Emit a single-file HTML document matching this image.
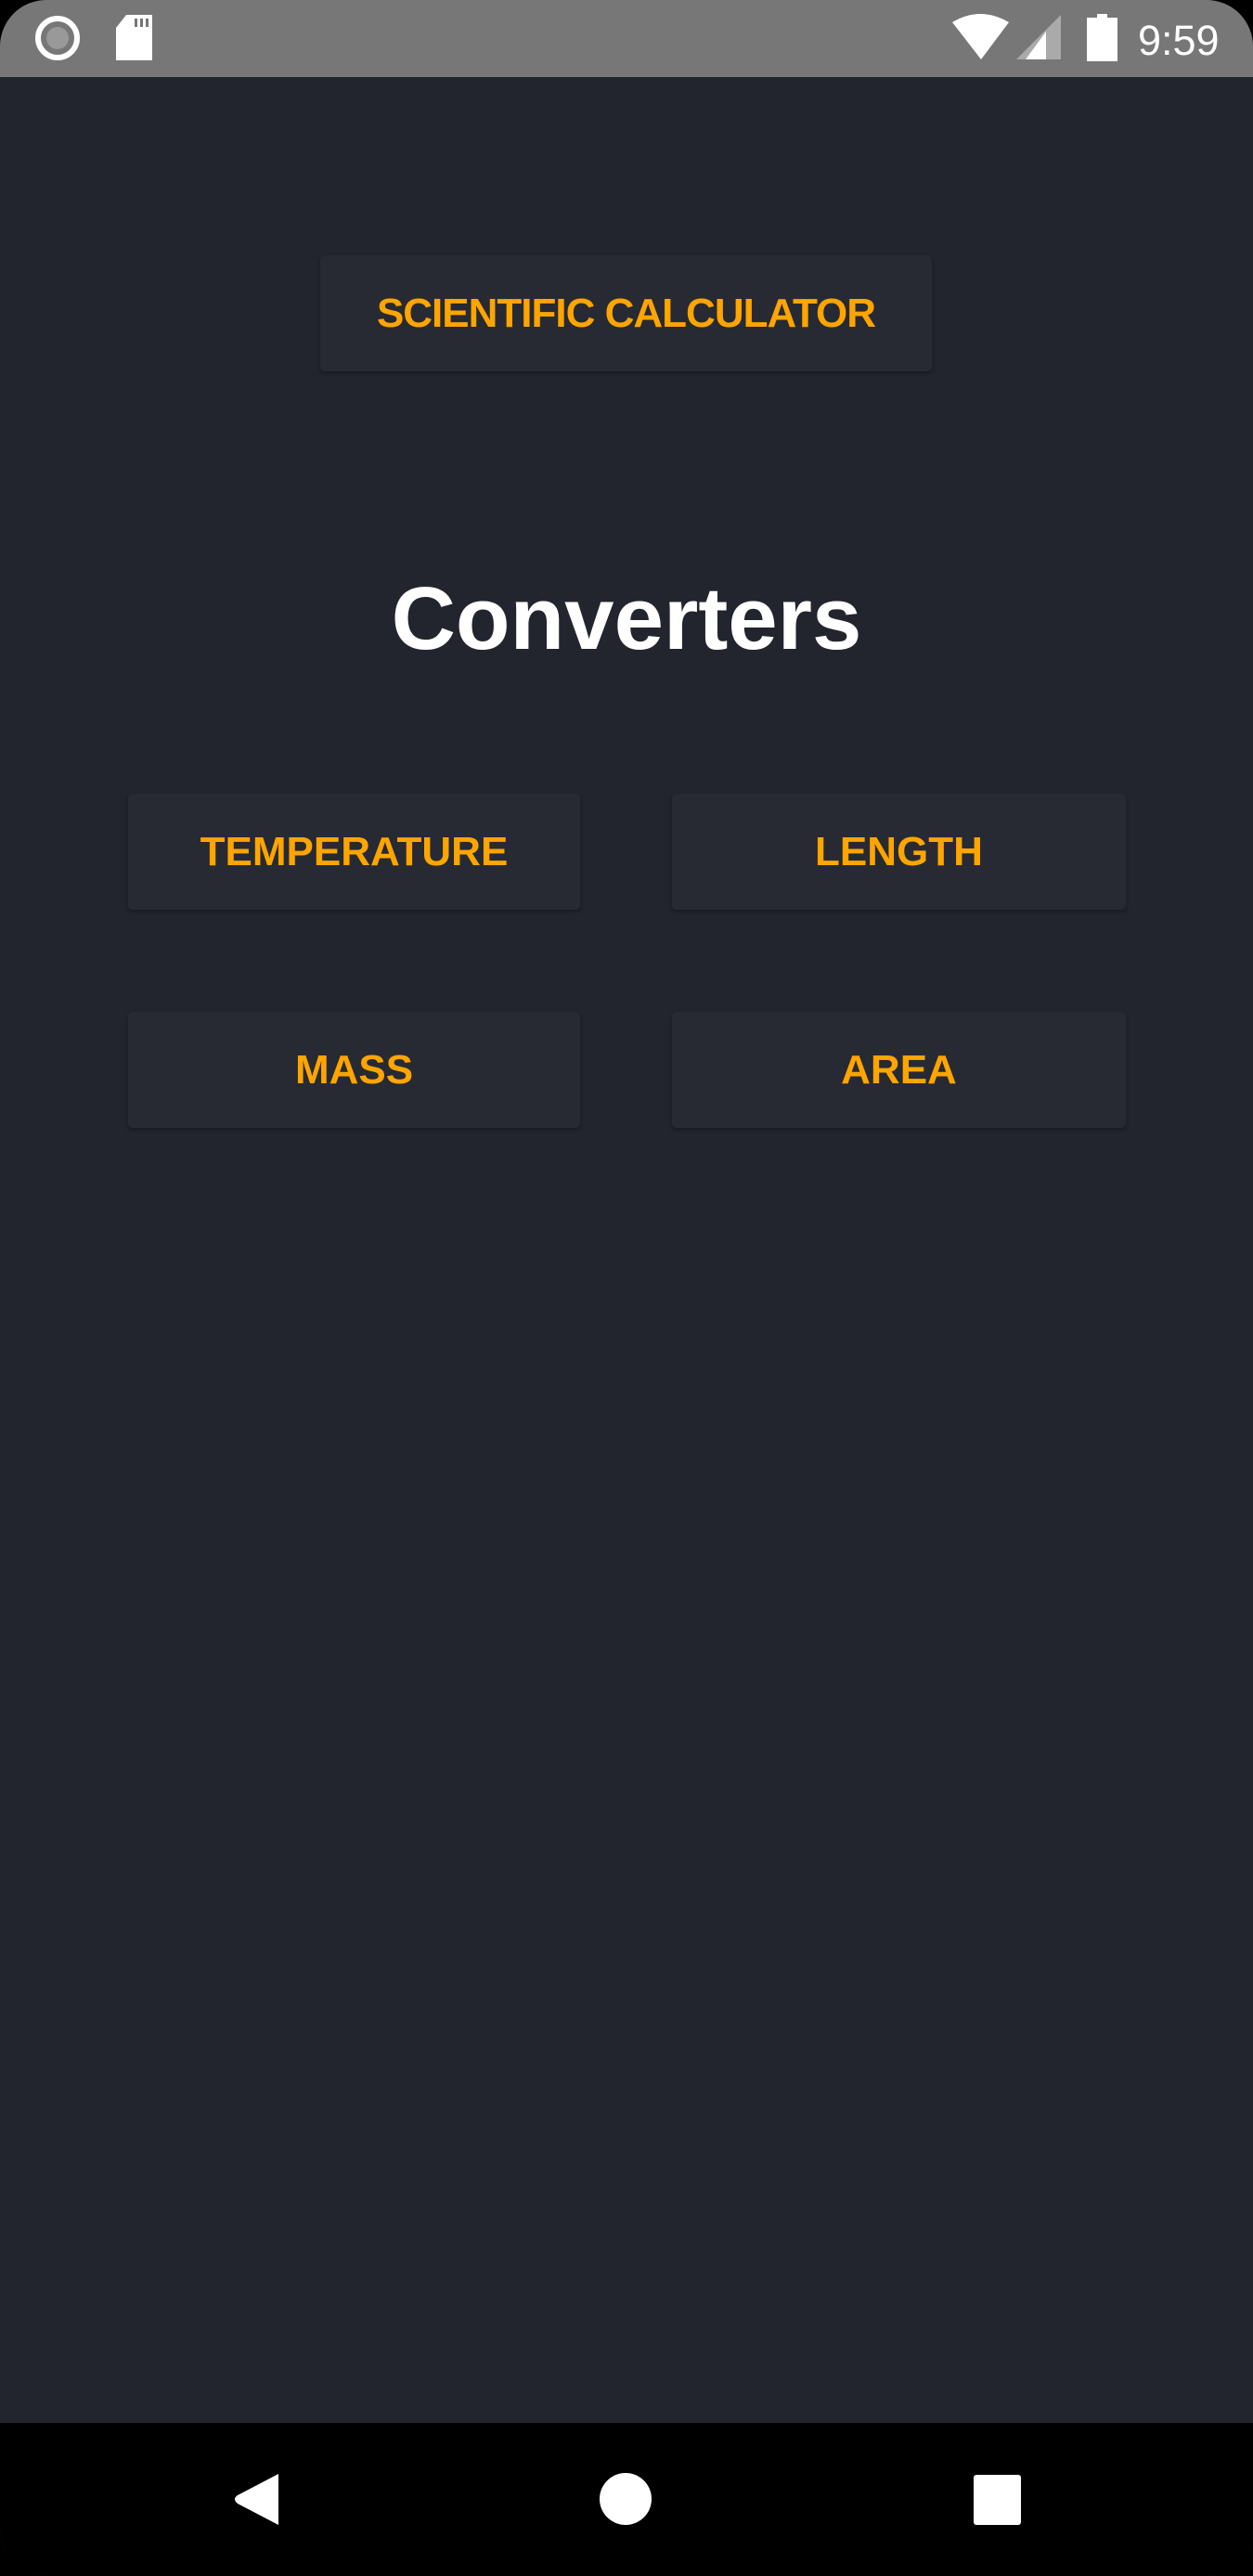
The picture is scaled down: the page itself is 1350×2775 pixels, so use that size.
<!DOCTYPE html>
<html><head><meta charset="utf-8"><style>
html,body{margin:0;padding:0;}
body{width:1350px;height:2775px;background:#000;position:relative;overflow:hidden;font-family:"Liberation Sans",sans-serif;}
.screen{position:absolute;left:0;top:0;width:1350px;height:2775px;background:#22252e;border-radius:50px;overflow:hidden;}
.status{position:absolute;left:0;top:0;width:1350px;height:83px;background:#777777;}
.nav{position:absolute;left:0;top:2610px;width:1350px;height:165px;background:#000;}
.btn{position:absolute;background:#272a33;border-radius:5px;box-shadow:0 2px 4px rgba(0,0,0,0.35);color:#ffa500;font-weight:700;font-size:44px;display:flex;align-items:center;justify-content:center;}
.title{position:absolute;left:0;width:1350px;top:612px;text-align:center;color:#fff;font-weight:700;font-size:96px;line-height:110px;}
.time{position:absolute;left:1226px;top:14px;color:#fff;font-size:45px;line-height:60px;}
</style></head><body>
<div class="screen">
  <div class="status">
    <svg width="1350" height="83" style="position:absolute;left:0;top:0">
      <circle cx="62" cy="41" r="21" fill="none" stroke="#fff" stroke-width="6"/>
      <circle cx="62" cy="41" r="12" fill="#999"/>
      <path d="M136 16 H164 V65 H125 V30 Z" fill="#fff"/>
      <rect x="145" y="20" width="3" height="9" fill="#777"/>
      <rect x="151" y="20" width="3" height="9" fill="#777"/>
      <rect x="157" y="20" width="3" height="9" fill="#777"/>
      <path d="M1026 24 Q1056 6 1087 24 L1057 64 Z" fill="#fff"/>
      <path d="M1143 16 V64 H1095 Z" fill="#aaa"/>
      <path d="M1127 34 V64 H1105 Z" fill="#fff"/>
      <rect x="1182" y="15" width="11" height="5" fill="#fff"/>
      <rect x="1171" y="19" width="33" height="47" fill="#fff"/>
    </svg>
    <div class="time">9:59</div>
  </div>

  <div class="btn" style="left:345px;top:275px;width:659px;height:125px;letter-spacing:-1px;">SCIENTIFIC CALCULATOR</div>

  <div class="title">Converters</div>

  <div class="btn" style="left:138px;top:855px;width:487px;height:125px;">TEMPERATURE</div>
  <div class="btn" style="left:724px;top:855px;width:489px;height:125px;">LENGTH</div>
  <div class="btn" style="left:138px;top:1090px;width:487px;height:125px;">MASS</div>
  <div class="btn" style="left:724px;top:1090px;width:489px;height:125px;">AREA</div>

  <div class="nav">
    <svg width="1350" height="165" style="position:absolute;left:0;top:0">
      <path d="M300 55 V110 L256 87 Q250 82 256 78 Z" fill="#fff"/>
      <circle cx="674" cy="82" r="28" fill="#fff"/>
      <rect x="1049" y="56" width="51" height="54" rx="3" fill="#fff"/>
    </svg>
  </div>
</div>
</body></html>
